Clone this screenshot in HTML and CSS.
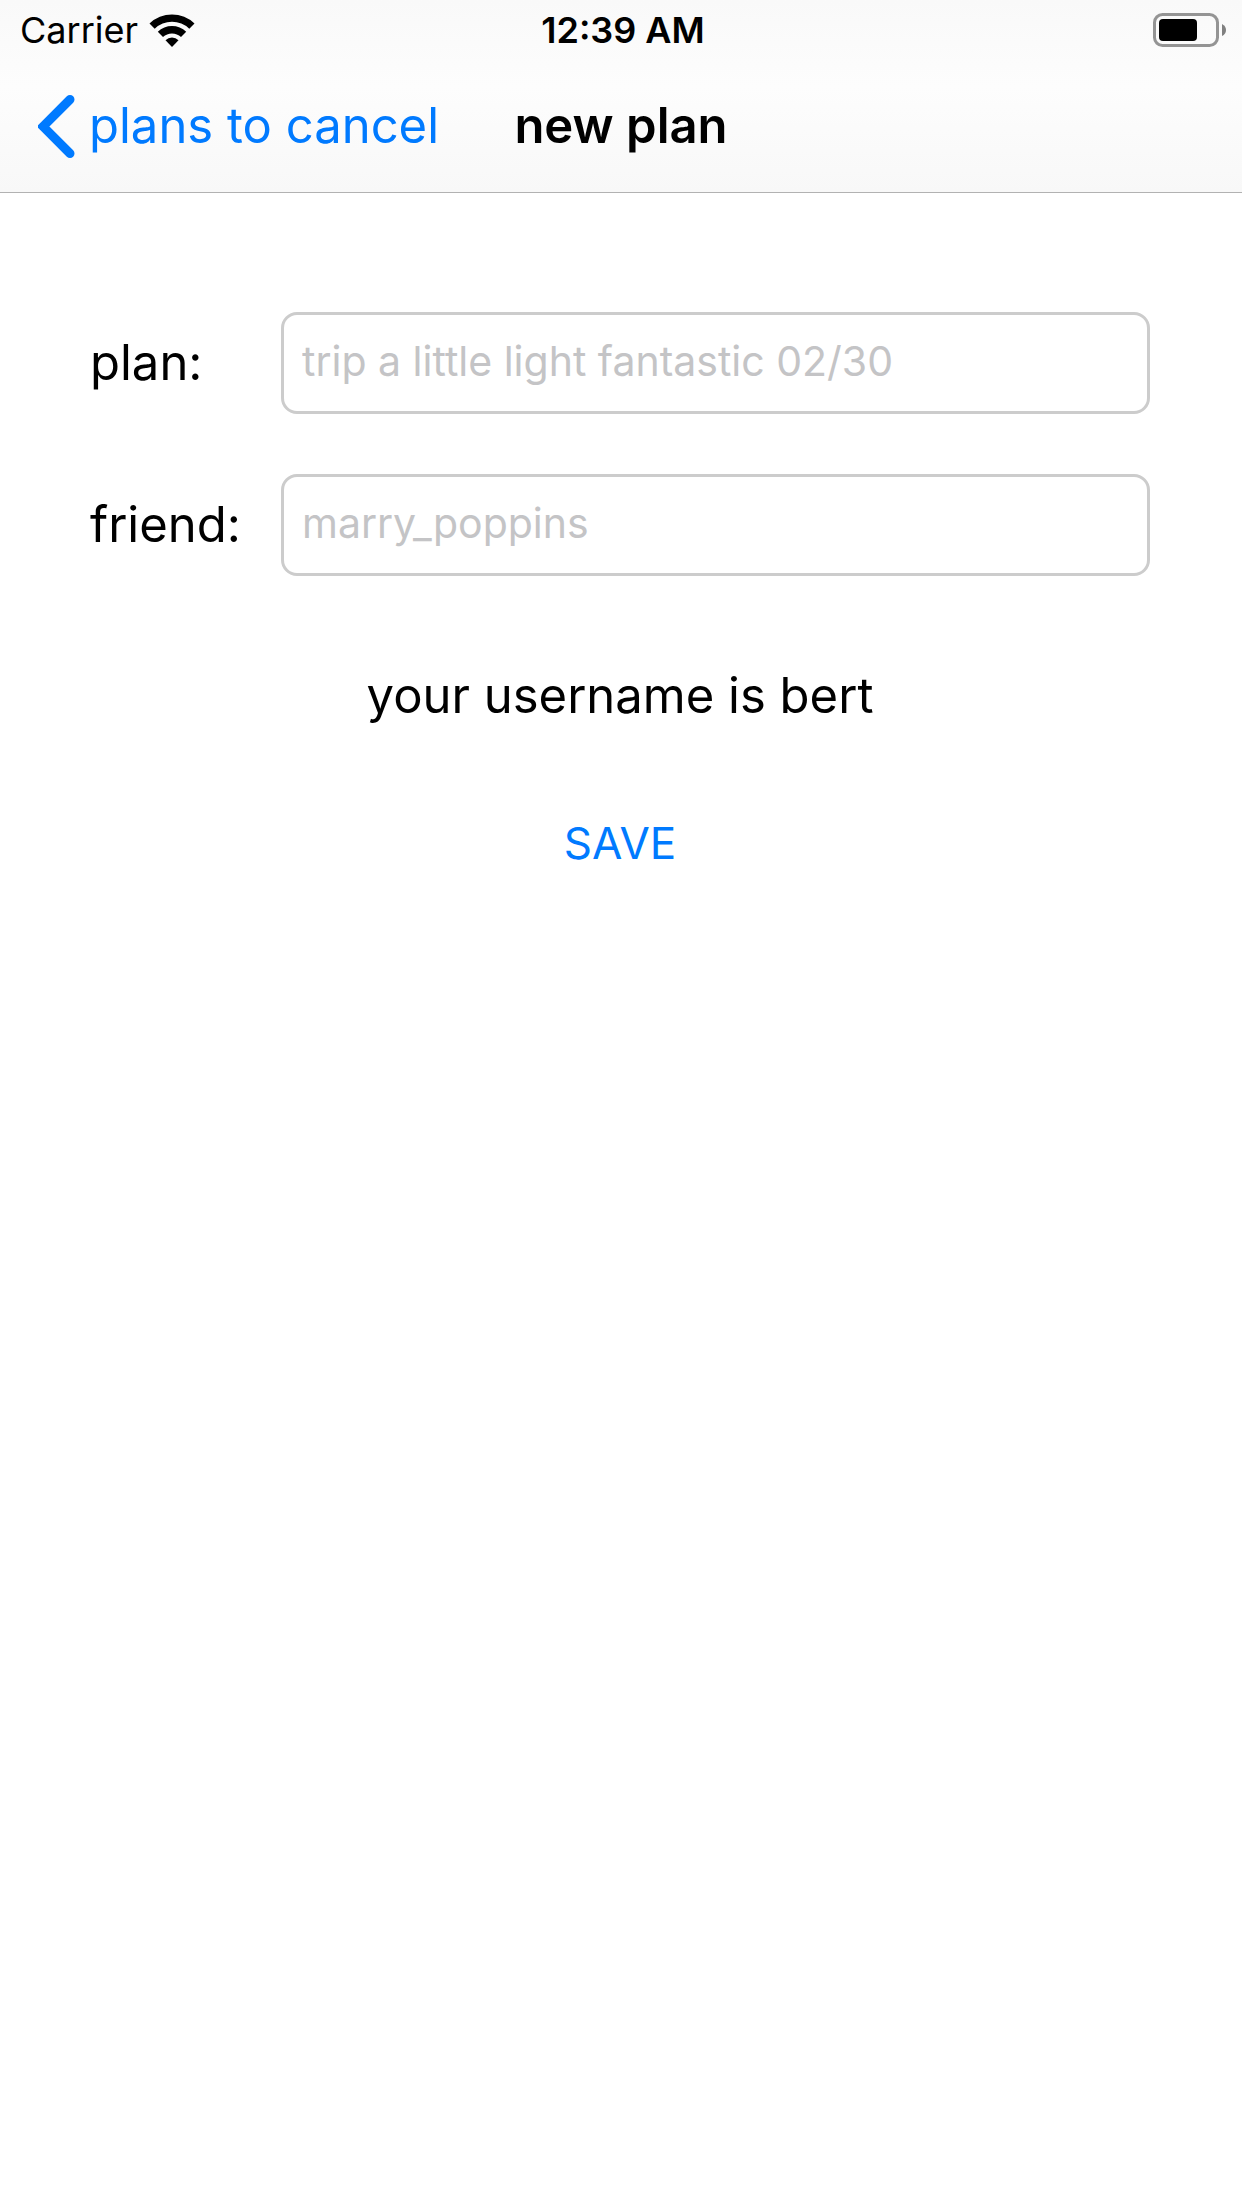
FILE: index.html
```html
<!DOCTYPE html>
<html lang="en">
<head>
<meta charset="utf-8">
<meta name="viewport" content="width=device-width, initial-scale=1">
<title>new plan</title>
<link rel="stylesheet" href="styles.css">
</head>
<body>
<header class="header">
  <div class="status">
    <div class="status-left">
      <span>Carrier</span>
      <svg class="wifi" viewBox="0 0 46 33" aria-hidden="true">
        <path d="M0.5 9.5A32.5 32.5 0 0 1 45.5 9.5L40.3 14.7A25 25 0 0 0 5.700 14.700Z"/>
        <path d="M8.800 17.800A20.500 20.500 0 0 1 37.200 17.800L32 23A13 13 0 0 0 14 23Z"/>
        <path d="M16.500 26.200A9.200 9.200 0 0 1 29.500 26.200L23 33Z"/>
      </svg>
    </div>
    <time class="clock">12:39 AM</time>
    <svg class="battery" viewBox="0 0 73 34" aria-hidden="true">
      <rect x="1.500" y="1.500" width="63" height="31" rx="8" fill="none" stroke="#949494" stroke-width="3"/>
      <rect x="6" y="6" width="38" height="22" rx="4"/>
      <path d="M69 11Q73 13 73 17Q73 21 69 23Z" fill="#808080"/>
    </svg>
  </div>
  <nav class="nav">
    <a class="back" href="#plans">
      <svg class="chevron" viewBox="0 0 37 63" aria-hidden="true">
        <path d="M32 4.500L5 31.500L32 58.500" fill="none" stroke="currentColor" stroke-width="9" stroke-linecap="round"/>
      </svg>
      <span>plans to cancel</span>
    </a>
    <h1 class="title">new plan</h1>
  </nav>
</header>
<main class="main">
  <form class="form">
    <div class="row">
      <label for="plan">plan:</label>
      <input class="field" id="plan" type="text" placeholder="trip a little light fantastic 02/30">
    </div>
    <div class="row">
      <label for="friend">friend:</label>
      <input class="field" id="friend" type="text" placeholder="marry_poppins">
    </div>
    <p class="username">your username is bert</p>
    <button class="save" type="button">SAVE</button>
  </form>
</main>
</body>
</html>
```
FILE: styles.css
```css
* {
  box-sizing: border-box;
}

body {
  margin: 0;
  background: #fff;
  color: #000;
  font-family: Inter, "Liberation Sans", sans-serif;
  font-size: 49px;
  line-height: 60px;
}

.header {
  border-bottom: 1px solid #b2b2b2;
  background: linear-gradient(#f9f9f9, #fdfdfd 45%, #f8f8f8);
}

.status {
  display: grid;
  grid-template-columns: 1fr auto 1fr;
  align-items: center;
  height: 60px;
  padding: 0 16px 0 20px;
  font-size: 36px;
}

.status-left {
  display: flex;
  align-items: center;
  gap: 11px;
}

.wifi {
  width: 46px;
  height: 33px;
}

.clock {
  font-weight: 600;
}

.battery {
  width: 73px;
  height: 34px;
  justify-self: end;
}

.nav {
  display: grid;
  grid-template-columns: 1fr auto 1fr;
  align-items: center;
  min-height: 132px;
  padding: 0 38px;
}

.back {
  display: flex;
  align-items: center;
  gap: 14px;
  color: #007aff;
  text-decoration: none;
  white-space: nowrap;
}

.chevron {
  width: 37px;
  height: 63px;
}

.title {
  margin: 0;
  font-size: 49px;
  font-weight: 600;
}

.form {
  display: flex;
  flex-direction: column;
  gap: 60px;
  padding: 119px 92px 60px 90px;
}

.row {
  display: grid;
  grid-template-columns: 151px 1fr;
  align-items: center;
  gap: 40px;
}

.field {
  width: 100%;
  min-width: 0;
  height: 102px;
  padding: 0 18px 4px;
  border: 3px solid #ccc;
  border-radius: 16px;
  background: #fff;
  color: #000;
  font: inherit;
  font-size: 41px;
}

.field::placeholder {
  color: #c4c4c6;
  opacity: 1;
}

.username {
  margin: 30px 0;
  text-align: center;
}

.save {
  align-self: center;
  padding: 0;
  border: 0;
  background: none;
  color: #007aff;
  font: inherit;
  font-size: 44px;
  line-height: 54px;
}
```
